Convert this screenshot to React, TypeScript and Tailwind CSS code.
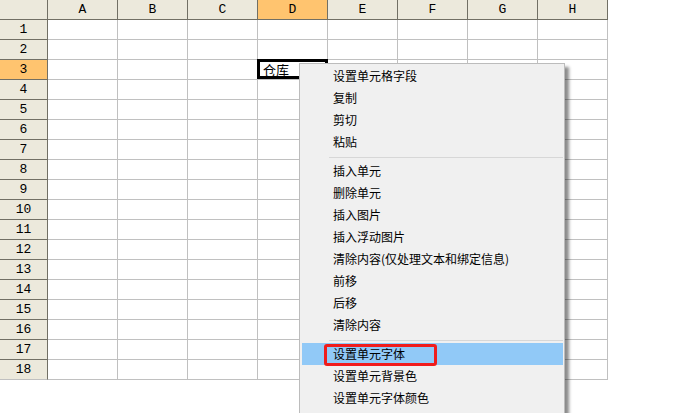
import React from "react";

const cols = ["A", "B", "C", "D", "E", "F", "G", "H"];
const rows = Array.from({ length: 18 }, (_, i) => i + 1);

type Item = { label: string; sep?: boolean; active?: boolean };

const items: Item[] = [
  { label: "设置单元格字段" },
  { label: "复制" },
  { label: "剪切" },
  { label: "粘贴" },
  { label: "", sep: true },
  { label: "插入单元" },
  { label: "删除单元" },
  { label: "插入图片" },
  { label: "插入浮动图片" },
  { label: "清除内容(仅处理文本和绑定信息)" },
  { label: "前移" },
  { label: "后移" },
  { label: "清除内容" },
  { label: "", sep: true },
  { label: "设置单元字体", active: true },
  { label: "设置单元背景色" },
  { label: "设置单元字体颜色" },
];

const hdrFont = { fontFamily: '"Liberation Mono", "DejaVu Sans Mono", monospace' };

export default function App() {
  return (
    <div className="relative w-[693px] h-[413px] overflow-hidden bg-white">
      <div className="grid grid-cols-[48px_repeat(8,70px)] grid-rows-[repeat(19,20px)] w-[608px]">
        <div className="bg-[#ece9dc] border-r border-b border-[#716f64]" />
        {cols.map((c) => (
          <div
            key={c}
            className={`flex items-center justify-center text-[13px] text-black border-r border-b border-[#716f64] ${
              c === "D" ? "bg-[#ffc46f]" : "bg-[#ece9dc]"
            }`}
            style={hdrFont}
          >
            {c}
          </div>
        ))}
        {rows.map((r) => (
          <React.Fragment key={r}>
            <div
              className={`flex items-center justify-center text-[13px] text-black border-r border-b border-r-[#716f64] ${
                r === 18 ? "border-b-[#c0c0c0]" : "border-b-[#716f64]"
              } ${r === 3 ? "bg-[#ffc46f]" : "bg-[#ece9dc]"}`}
              style={hdrFont}
            >
              {r}
            </div>
            {cols.map((c) => (
              <div
                key={c}
                className="border-r border-b border-[#c0c0c0] flex items-center pl-[5px] text-[13px] text-black"
                style={{ fontFamily: '"Noto Sans CJK SC", sans-serif' }}
              >
                {r === 3 && c === "D" ? "仓库" : ""}
              </div>
            ))}
          </React.Fragment>
        ))}
      </div>

      {/* selection box */}
      <div className="absolute left-[257px] top-[59px] w-[71px] h-[20px] border-[3px] border-black" />

      {/* context menu */}
      <div
        className="absolute left-[299px] top-[63px] w-[266px] bg-[#f0f0f0] border border-[#bcbcbc] pl-[2px] pr-[1px] pt-[1px] pb-[6px] shadow-[4px_4px_3px_rgba(0,0,0,0.45)]"
        style={{ fontFamily: '"Noto Sans CJK SC", "Noto Sans", sans-serif' }}
      >
        {items.map((it, i) =>
          it.sep ? (
            <div key={i} className="mt-[4px] mb-[2px] ml-[27px] h-px bg-[#d7d7d7]" />
          ) : (
            <div
              key={i}
              className={`relative h-[22px] leading-[22px] pl-[31px] text-[12px] text-black whitespace-nowrap ${
                it.active ? "bg-[#91c9f7]" : ""
              }`}
            >
              {it.label}
              {it.active && (
                <div className="absolute left-[22px] top-[1px] w-[113px] h-[22px] border-[3px] border-[#f01c1c] rounded-[3px]" />
              )}
            </div>
          )
        )}
      </div>
    </div>
  );
}
